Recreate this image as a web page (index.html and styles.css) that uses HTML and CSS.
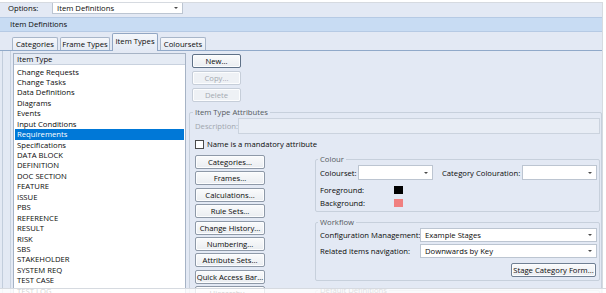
FILE: index.html
```html
<!DOCTYPE html>
<html>
<head>
<meta charset="utf-8">
<link rel="stylesheet" href="styles.css">
</head>
<body>
<div class="app">
  <div class="frame">
    <div class="options">
      <span class="options-label">Options:</span>
      <div class="select options-select">Item Definitions</div>
    </div>
    <div class="section-header">Item Definitions</div>
    <div class="tabs">
      <div class="tab t-cat">Categories</div>
      <div class="tab t-frame">Frame Types</div>
      <div class="tab t-item active">Item Types</div>
      <div class="tab t-col">Coloursets</div>
    </div>
    <div class="pane">
      <div class="list-frame">
        <div class="list">
          <div class="list-header">Item Type</div>
          <div class="items">
            <div class="item">Change Requests</div>
            <div class="item">Change Tasks</div>
            <div class="item">Data Definitions</div>
            <div class="item">Diagrams</div>
            <div class="item">Events</div>
            <div class="item">Input Conditions</div>
            <div class="item sel">Requirements</div>
            <div class="item">Specifications</div>
            <div class="item">DATA BLOCK</div>
            <div class="item">DEFINITION</div>
            <div class="item">DOC SECTION</div>
            <div class="item">FEATURE</div>
            <div class="item">ISSUE</div>
            <div class="item">PBS</div>
            <div class="item">REFERENCE</div>
            <div class="item">RESULT</div>
            <div class="item">RISK</div>
            <div class="item">SBS</div>
            <div class="item">STAKEHOLDER</div>
            <div class="item">SYSTEM REQ</div>
            <div class="item">TEST CASE</div>
            <div class="item">TEST LOG</div>
          </div>
        </div>
      </div>
      <div class="side">
        <div class="btns-top">
          <div class="btn default">New...</div>
          <div class="btn disabled">Copy...</div>
          <div class="btn disabled">Delete</div>
        </div>
        <fieldset class="group attrs">
          <legend>Item Type Attributes</legend>
          <div class="desc-row">
            <span class="desc-label">Description:</span>
            <div class="input disabled-input"></div>
          </div>
          <div class="check-row">
            <span class="checkbox"></span>
            <span class="check-label">Name is a mandatory attribute</span>
          </div>
          <div class="attrs-body">
            <div class="btn-stack">
              <div class="btn">Categories...</div>
              <div class="btn">Frames...</div>
              <div class="btn">Calculations...</div>
              <div class="btn">Rule Sets...</div>
              <div class="btn">Change History...</div>
              <div class="btn">Numbering...</div>
              <div class="btn">Attribute Sets...</div>
              <div class="btn">Quick Access Bar...</div>
              <div class="btn">Hierarchy...</div>
            </div>
            <div class="right-groups">
              <fieldset class="group colour">
                <legend>Colour</legend>
                <div class="colour-row">
                  <span class="lbl-colourset">Colourset:</span>
                  <div class="select small-select"></div>
                  <span class="lbl-catcol">Category Colouration:</span>
                  <div class="select small-select"></div>
                </div>
                <div class="swatch-row first">
                  <span class="lbl-swatch">Foreground:</span>
                  <span class="swatch fg"></span>
                </div>
                <div class="swatch-row">
                  <span class="lbl-swatch">Background:</span>
                  <span class="swatch bg"></span>
                </div>
              </fieldset>
              <fieldset class="group workflow">
                <legend>Workflow</legend>
                <div class="wf-row first">
                  <span class="lbl-wf">Configuration Management:</span>
                  <div class="select wf-select">Example Stages</div>
                </div>
                <div class="wf-row">
                  <span class="lbl-wf">Related items navigation:</span>
                  <div class="select wf-select">Downwards by Key</div>
                </div>
                <div class="wf-actions">
                  <div class="btn stage-btn">Stage Category Form...</div>
                </div>
              </fieldset>
              <fieldset class="group defaults">
                <legend>Default Definitions</legend>
                <div class="defaults-body"></div>
              </fieldset>
            </div>
          </div>
        </fieldset>
      </div>
    </div>
  </div>
  <div class="fade"></div>
</div>
</body>
</html>
```
FILE: styles.css
```css
* { box-sizing: border-box; }

body {
  margin: 0;
  width: 606px;
  height: 293px;
  overflow: hidden;
  background: #ffffff;
  font-family: "Open Sans", "Noto Sans", sans-serif;
  font-size: 7.7px;
  color: #0a0a0a;
}

.app {
  position: relative;
  width: 606px;
  height: 293px;
  overflow: hidden;
}

.frame {
  margin-top: 2px;
  width: 603px;
  height: 291px;
  border-top: 1px solid #d6dae0;
  border-right: 1px solid #d6dae0;
  background: #e3e9f4;
  display: flex;
  flex-direction: column;
  overflow: hidden;
}

/* Options bar */
.options {
  height: 14px;
  flex: none;
  display: flex;
  align-items: flex-start;
  padding-left: 8px;
}
.options-label {
  width: 44px;
  line-height: 10px;
}
.select {
  position: relative;
  background: #ffffff;
  border: 1px solid #bcc5d1;
  padding-left: 4px;
  white-space: nowrap;
}
.select::after {
  content: "";
  position: absolute;
  right: 4px;
  top: 50%;
  margin-top: -1px;
  border-left: 2px solid transparent;
  border-right: 2px solid transparent;
  border-top: 2.5px solid #4a4a4a;
}
.options-select {
  width: 131px;
  height: 12px;
  line-height: 10px;
  margin-top: -1px;
}

/* Section header */
.section-header {
  flex: none;
  height: 15px;
  border-top: 1px solid #b6cae4;
  border-bottom: 1px solid #b6cae4;
  background: #c8dcf3;
  padding-left: 10px;
  line-height: 13px;
}

/* Tabs */
.tabs {
  flex: none;
  height: 19px;
  display: flex;
  align-items: flex-end;
  gap: 2px;
  padding-left: 12px;
  border-bottom: 1px solid #90a9c9;
}
.tab {
  height: 13px;
  line-height: 12px;
  text-align: center;
  border: 1px solid #a8b6c9;
  border-bottom: 0;
  border-radius: 2px 2px 0 0;
  background: linear-gradient(#f5f7fb, #e5ebf4);
  white-space: nowrap;
}
.t-cat { width: 46px; }
.t-frame { width: 50px; }
.t-item { width: 46px; }
.t-col { width: 46px; }
.tab.active {
  height: 18px;
  margin-bottom: -1px;
  line-height: 14px;
  background: linear-gradient(#f4f7fb, #e3e9f4);
  border-color: #91a6c3;
  position: relative;
}

/* Pane */
.pane {
  flex: 1;
  display: flex;
  margin-left: 2px;
  border-left: 1px solid #c2cddc;
  min-height: 0;
}
.list-frame {
  margin-left: 7px;
  border-left: 1px solid #c8d2df;
  padding-left: 2px;
  flex: none;
}
.list {
  margin-top: 2px;
  width: 173px;
  height: 260px;
  border: 1px solid #a6b3c5;
  background: #ffffff;
}
.list-header {
  height: 11px;
  line-height: 10px;
  padding-left: 3px;
  background: #e5ebf4;
  border-bottom: 1px solid #c8d1de;
}
.items {
  padding-top: 1.5px;
}
.item {
  height: 10.45px;
  line-height: 10.45px;
  padding-left: 3px;
  white-space: nowrap;
}
.item.sel {
  background: #0078d7;
  color: #ffffff;
  margin: 0 1px;
  padding-left: 2px;
}

/* Side */
.side {
  flex: 1;
  margin-left: 3px;
  padding-top: 3px;
  min-width: 0;
}
.btns-top {
  margin-left: 3px;
  display: flex;
  flex-direction: column;
  gap: 3px;
}
.btns-top .btn { width: 49px; }

.btn {
  height: 14px;
  line-height: 12px;
  text-align: center;
  white-space: nowrap;
  border: 1px solid #8e99a8;
  border-radius: 2px;
  background: linear-gradient(#fafbfc, #eaedf1);
  box-shadow: inset 0 0 0 1px #fcfdfe;
}
.btn.default {
  border-color: #5f7187;
}
.btn.disabled {
  color: #a4a9b1;
  border-color: #c6ced9;
  background: #eef1f5;
}

/* Group boxes */
.group {
  margin: 0;
  border: 1px solid #c7d0dc;
  border-radius: 2px;
  min-width: 0;
}
.group legend {
  padding: 0 2px;
  margin-left: -2px;
  line-height: 10px;
  color: #555a61;
}
.attrs {
  margin-top: 5px;
  padding: 0 1px 0 5px;
  height: 200px;
}
.desc-row {
  margin-top: 1px;
  height: 16px;
  display: flex;
  align-items: center;
}
.desc-label {
  width: 43px;
  color: #a0a5ad;
}
.input {
  flex: 1;
  height: 16px;
  border: 1px solid #cbd3de;
}
.disabled-input {
  background: #e8edf5;
}
.check-row {
  margin-top: 3px;
  height: 14px;
  display: flex;
  align-items: center;
}
.checkbox {
  width: 9px;
  height: 9px;
  border: 1px solid #4a4a4a;
  background: #ffffff;
}
.check-label {
  margin-left: 3px;
}
.attrs-body {
  margin-top: 3px;
  display: flex;
  align-items: flex-start;
}
.btn-stack {
  width: 70px;
  padding-top: 1px;
  display: flex;
  flex-direction: column;
  gap: 2.4px;
  flex: none;
}
.right-groups {
  flex: 1;
  margin-left: 50px;
  min-width: 0;
}

/* Colour group */
.colour {
  padding: 0 2px 1px 4px;
}
.colour-row {
  margin-top: 1px;
  height: 15px;
  display: flex;
  align-items: center;
}
.lbl-colourset { width: 38px; }
.small-select {
  width: 75px;
  height: 15px;
}
.lbl-catcol {
  margin-left: 9px;
  width: 80px;
  white-space: nowrap;
}
.swatch-row {
  height: 13.3px;
  display: flex;
  align-items: center;
}
.swatch-row.first { margin-top: 3.5px; }
.lbl-swatch { width: 74px; }
.swatch {
  width: 9px;
  height: 8px;
}
.swatch.fg { background: #000000; }
.swatch.bg { background: #f08080; }

/* Workflow group */
.workflow {
  margin-top: 5px;
  padding: 0 2px 3px 4px;
}
.wf-row {
  height: 14px;
  display: flex;
  align-items: center;
  margin-top: 2px;
}
.wf-row.first { margin-top: 1px; }
.lbl-wf {
  width: 100px;
  white-space: nowrap;
}
.wf-select {
  flex: 1;
  height: 14px;
  line-height: 12px;
}
.wf-actions {
  margin-top: 5px;
  display: flex;
  justify-content: flex-end;
}
.stage-btn {
  width: 85px;
  margin-right: 1px;
  border-color: #6f7f93;
}

/* Defaults group */
.defaults {
  margin-top: 4px;
  padding: 0 2px 0 4px;
}
.defaults-body { height: 20px; }

/* bottom fade */
.fade {
  position: absolute;
  left: 0;
  top: 288px;
  width: 606px;
  height: 5px;
  background: rgba(255, 255, 255, 0.8);
  border-top: 1px solid #d6dae0;
}
```
